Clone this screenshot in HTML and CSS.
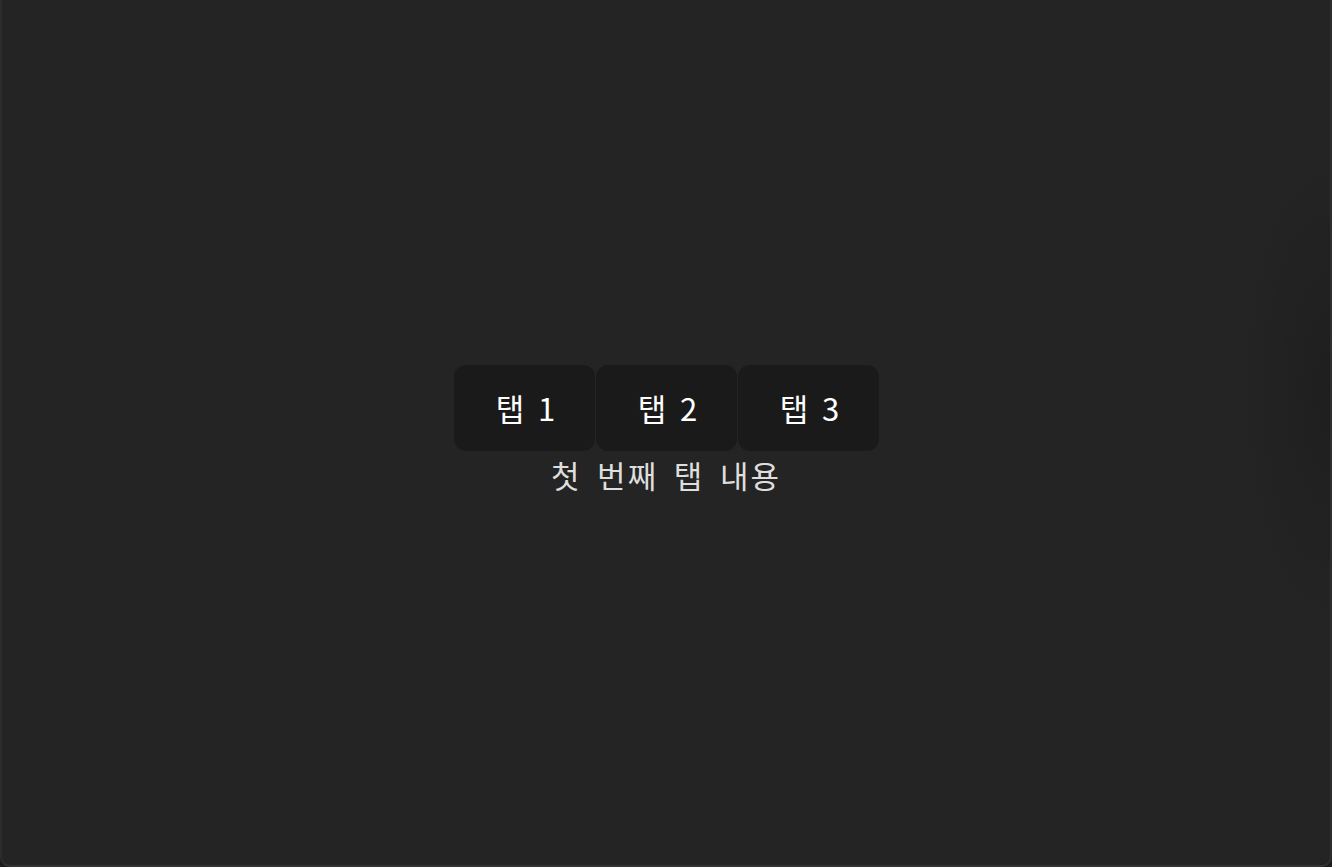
FILE: index.html
```html
<!DOCTYPE html>
<html lang="ko">
<head>
<meta charset="utf-8">
<title>탭</title>
<link rel="stylesheet" href="styles.css">
</head>
<body>
<div class="window">
  <div class="shade"></div>
  <div class="mark"></div>
  <div class="app">
    <div class="tabs">
      <button class="tab">탭 1</button>
      <button class="tab">탭 2</button>
      <button class="tab">탭 3</button>
    </div>
    <p class="content">첫 번째 탭 내용</p>
  </div>
</div>
</body>
</html>
```
FILE: styles.css
```css
html, body {
  margin: 0;
  padding: 0;
  background: #1c1c1c;
}
body {
  font-family: "Noto Sans CJK KR", "Noto Sans", sans-serif;
}
.window {
  position: relative;
  box-sizing: border-box;
  height: 867px;
  background: #242424;
  border-left: 2px solid #2c2c2c;
  border-right: 2px solid #2e2e2e;
  border-bottom: 2px solid #333333;
  border-radius: 0 0 10px 10px;
  display: flex;
  align-items: center;
  justify-content: center;
  overflow: hidden;
}
.shade {
  position: absolute;
  right: 0;
  top: 150px;
  width: 90px;
  height: 480px;
  background: radial-gradient(ellipse at 100% 50%, rgba(0,0,0,0.16) 0%, rgba(0,0,0,0) 70%);
  pointer-events: none;
}
.mark {
  position: absolute;
  left: -2px;
  top: 754px;
  width: 2px;
  height: 7px;
  background: #8e2a42;
}
.app {
  display: flex;
  flex-direction: column;
  align-items: center;
  margin-top: -2px;
}
.tabs {
  display: flex;
  gap: 1px;
}
.tab {
  width: 141px;
  height: 86px;
  border: none;
  border-radius: 12px;
  background: #1a1a1a;
  color: #ffffff;
  font-family: "Noto Sans CJK KR", "Noto Sans", sans-serif;
  font-size: 31px;
  letter-spacing: 1px;
  word-spacing: 3px;
  padding: 0 0 0 4px;
  cursor: pointer;
}
.content {
  margin: 0;
  color: #dedede;
  font-size: 31px;
  line-height: 48px;
  letter-spacing: 2px;
  word-spacing: 5px;
}
```
